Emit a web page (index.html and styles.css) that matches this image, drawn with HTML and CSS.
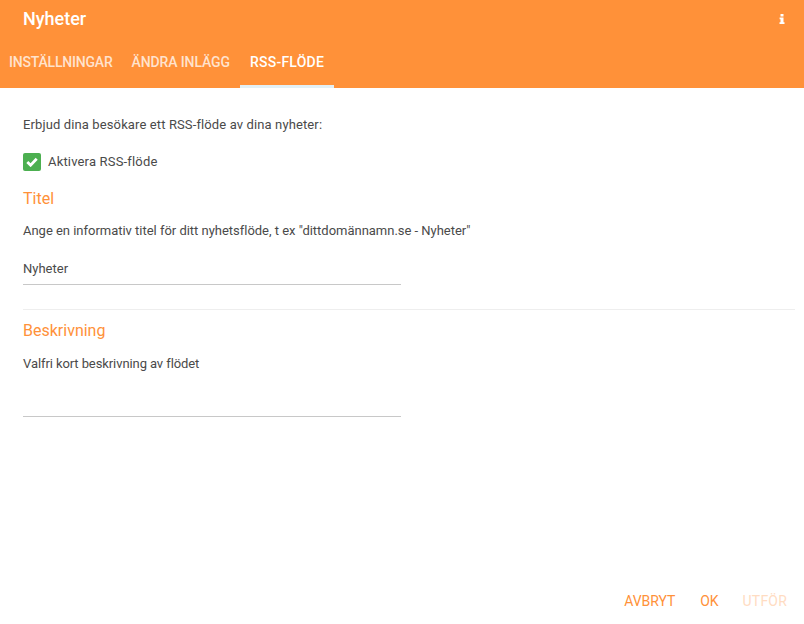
FILE: index.html
```html
<!DOCTYPE html>
<html lang="sv">
<head>
<meta charset="utf-8">
<title>Nyheter</title>
<link rel="stylesheet" href="styles.css">
</head>
<body>
<div class="dialog">
  <header class="header">
    <div class="titlebar">
      <h1 class="title">Nyheter</h1>
      <svg class="info" width="6" height="10" viewBox="0 0 6 10"><path fill="#fff" d="M1.5 0h3v2.4h-3zM.6 3.4h3.9v4.8h1v1.8H.5V8.2h1V5.2H.6z"/></svg>
    </div>
    <nav class="tabs">
      <a class="tab">Inställningar</a>
      <a class="tab second-tab">Ändra inlägg</a>
      <a class="tab active">RSS-flöde</a>
    </nav>
  </header>
  <main class="content">
    <p class="intro">Erbjud dina besökare ett RSS-flöde av dina nyheter:</p>
    <label class="check">
      <span class="box"><svg width="12" height="10" viewBox="0 0 12 10"><path d="M1.3 5 4.6 8.2 10.7 1.8" fill="none" stroke="#fff" stroke-width="2.8"/></svg></span>
      Aktivera RSS-flöde
    </label>
    <section class="section first">
      <h2 class="heading">Titel</h2>
      <p class="help">Ange en informativ titel för ditt nyhetsflöde, t ex "dittdomännamn.se - Nyheter"</p>
      <div class="field">Nyheter</div>
    </section>
    <section class="section second">
      <h2 class="heading">Beskrivning</h2>
      <p class="help narrow">Valfri kort beskrivning av flödet</p>
      <div class="field narrow-field"></div>
    </section>
  </main>
  <footer class="footer">
    <a class="action">Avbryt</a>
    <a class="action">OK</a>
    <a class="action disabled">Utför</a>
  </footer>
</div>
</body>
</html>
```
FILE: styles.css
```css
* { box-sizing: border-box; }
html, body { margin: 0; height: 100%; }
body { font-family: Roboto, "Liberation Sans", sans-serif; color: #4a4a4a; background: #fff; overflow: hidden; }
.dialog { height: 624px; display: flex; flex-direction: column; }
.header { background: #ff9139; height: 88px; color: #fff; display: flex; flex-direction: column; }
.titlebar { height: 39px; padding: 0 19px 1px 23px; display: flex; align-items: center; justify-content: space-between; }
.title { margin: 0; font-size: 18px; font-weight: 500; line-height: 38px; }
.tabs { display: flex; height: 49px; }
.tab { display: block; padding: 0 10px 0 9px; height: 49px; line-height: 46px; font-size: 14px; font-weight: 500; text-transform: uppercase; color: rgba(255,255,255,.75); letter-spacing: -.2px; }
.second-tab { letter-spacing: -.12px; padding-right: 10px; }
.tab.active { color: #fff; border-bottom: 3px solid #e3f0f5; padding: 0 10px; letter-spacing: .25px; }
.content { flex: 1; padding: 0 9px 0 23px; }
.intro { margin: 29px 0 0; font-size: 13px; line-height: 16px; letter-spacing: .12px; }
.check { display: flex; align-items: center; gap: 7px; margin-top: 20px; font-size: 13px; line-height: 18px; height: 18px; letter-spacing: .17px; }
.box { width: 18px; height: 18px; border-radius: 2px; background: #4caf50; display: flex; align-items: center; justify-content: center; }
.heading { margin: 0; font-size: 16px; font-weight: 400; line-height: 20px; color: #ff9139; }
.help { margin: 14px 0 0; font-size: 13px; line-height: 16px; letter-spacing: -.02px; }
.narrow { letter-spacing: -.09px; margin-top: 15px; }
.field { width: 378px; height: 30px; margin-top: 16px; border-bottom: 1px solid #c8c8c8; font-size: 13px; line-height: 20px; padding-top: 4px; }
.narrow-field { margin-top: 15px; }
.section.first { margin-top: 18px; padding-bottom: 24px; border-bottom: 1px solid #eee; }
.section.second { margin-top: 11px; }
.footer { height: 54px; display: flex; justify-content: flex-end; gap: 25px; padding-right: 17px; font-size: 14px; line-height: 18px; padding-top: 22px; }
.action { color: #ff9139; text-transform: uppercase; letter-spacing: -.05px; }
.action.disabled { color: #ffdcc2; letter-spacing: .2px; margin-left: -1px; }
```
